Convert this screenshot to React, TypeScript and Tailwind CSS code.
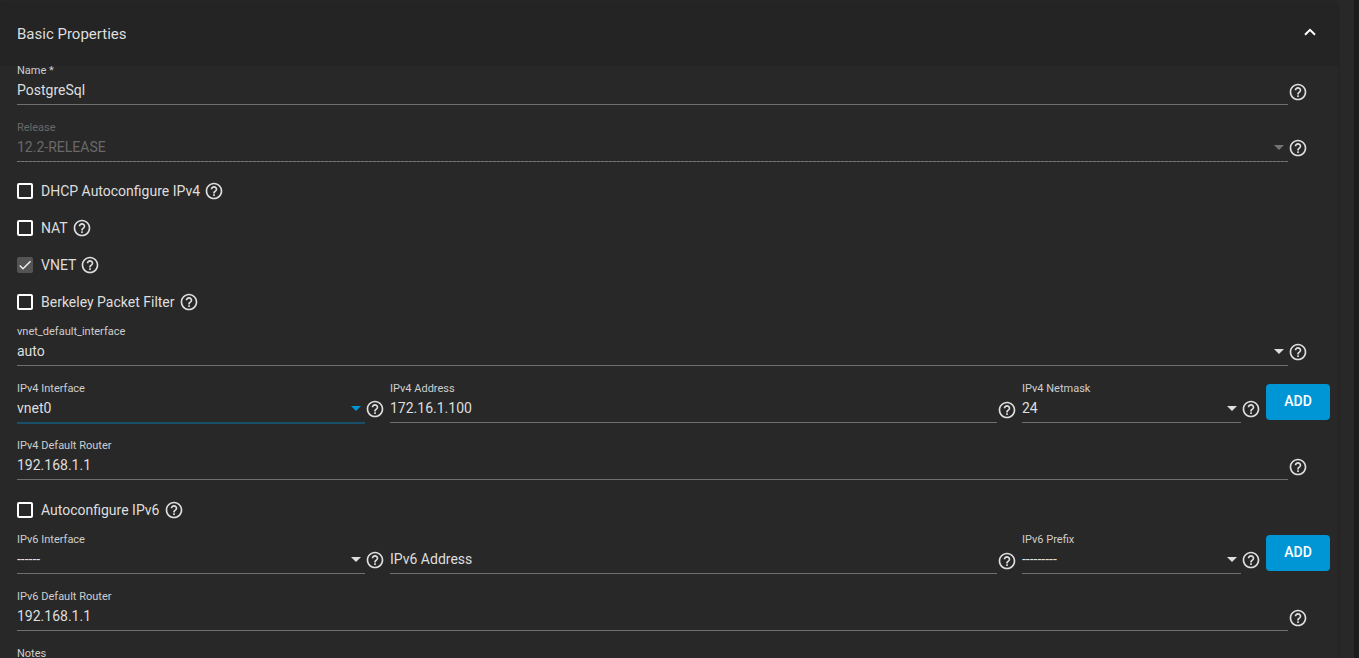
import { useId, useState } from "react";
import type { ReactNode } from "react";
import { MdHelpOutline } from "react-icons/md";

function Help({ topic }: { topic: string }) {
  return (
    <button type="button" aria-label={`Help: ${topic}`} className="block size-5 shrink-0 text-[#dedede]">
      <MdHelpOutline className="size-5" />
    </button>
  );
}

type FieldProps = {
  label: string;
  kind: "text" | "select";
  value?: string;
  disabled?: boolean;
  focused?: boolean;
  floating?: boolean;
};

function Field({ label, kind, value = "", disabled, focused, floating = true }: FieldProps) {
  const id = useId();
  const [current, setCurrent] = useState(value);
  const tone = disabled ? "text-[#686868]" : "text-[#dedede]";
  const labelTone = disabled ? "text-[#686868]" : "text-[#cecece]";
  const arrowTone = focused ? "text-[#0095d5]" : disabled ? "text-[#747474]" : "text-[#dedede]";
  return (
    <div className="flex min-w-0">
      <div className="flex h-[39px] min-w-0 flex-1 flex-col">
        <label htmlFor={id} className={`h-[10px] text-[11px] leading-[10px] ${floating ? labelTone : "invisible"}`}>
          {label}
        </label>
        <div className="mt-1 grid items-center">
          {kind === "text" ? (
            <input
              id={id}
              aria-label={label}
              placeholder={floating ? undefined : label}
              value={current}
              onChange={(e) => setCurrent(e.target.value)}
              className={`col-start-1 row-start-1 h-5 w-full min-w-0 bg-transparent text-sm outline-none placeholder:text-[#dedede] ${tone}`}
            />
          ) : (
            <>
              <select
                id={id}
                disabled={disabled}
                defaultValue={value}
                className={`col-start-1 row-start-1 h-5 w-full min-w-0 appearance-none bg-transparent text-sm opacity-100 outline-none ${tone}`}
              >
                <option value={value}>{value}</option>
              </select>
              <svg
                viewBox="0 0 10 5"
                aria-hidden="true"
                className={`pointer-events-none col-start-1 row-start-1 mr-1 h-[5px] w-[10px] justify-self-end ${arrowTone}`}
              >
                <path d="M0 0h10L5 5z" fill="currentColor" />
              </svg>
            </>
          )}
        </div>
        {disabled ? (
          <div className="mt-1 h-px shrink-0 bg-[repeating-linear-gradient(to_right,#747474_0_3px,#555555_3px_4px)]" />
        ) : focused ? (
          <div className="mt-1 h-0.5 shrink-0 bg-[#185069]" />
        ) : (
          <div className="mt-1 h-px shrink-0 bg-[#6f6f6f]" />
        )}
      </div>
      <div className={kind === "text" ? "pt-4" : "pt-[15px]"}>
        <Help topic={label} />
      </div>
    </div>
  );
}

function Check({ label, checked = false, disabled }: { label: string; checked?: boolean; disabled?: boolean }) {
  const [on, setOn] = useState(checked);
  return (
    <div className="flex h-9 items-center gap-1">
      <label className="flex items-center gap-2 text-sm text-[#dedede]">
        <span className="grid size-4">
          <input
            type="checkbox"
            checked={on}
            disabled={disabled}
            onChange={(e) => setOn(e.target.checked)}
            className="col-start-1 row-start-1 size-4 appearance-none rounded-xs border-2 border-white checked:border-[#545454] checked:bg-[#545454]"
          />
          {on && (
            <svg viewBox="0 0 24 24" aria-hidden="true" className="pointer-events-none col-start-1 row-start-1 size-4">
              <path d="M4.1 12.7 9 17.6 20.3 6.3" fill="none" stroke="#f0f0f0" strokeWidth="2.2" />
            </svg>
          )}
        </span>
        {label}
      </label>
      <Help topic={label} />
    </div>
  );
}

function AddressRow({ children }: { children: ReactNode }) {
  return (
    <div className="-mr-[22px] grid grid-cols-[373fr_632fr_244fr_64px] items-start *:pr-[5px]">
      {children}
      <button
        type="button"
        className="h-9 w-16 rounded-sm bg-[#0095d5] !px-0 pb-0.5 text-sm font-medium text-white"
      >
        ADD
      </button>
    </div>
  );
}

export default function App() {
  const [open, setOpen] = useState(true);
  return (
    <main className="h-screen overflow-hidden border-r-[5px] border-[#1c1c1c] bg-[#282828] pt-px pr-4 font-['Roboto',sans-serif]">
      <section className="min-h-full rounded-t-sm bg-[#282828] shadow-[0_1px_3px_rgba(0,0,0,0.3)]">
        <h2>
          <button
            type="button"
            aria-expanded={open}
            onClick={() => setOpen(!open)}
            className="flex h-[65px] w-full items-center justify-between rounded-t-sm bg-[#242424] pt-0.5 pr-[22px] pl-[17px] text-[15px] text-[#dedede]"
          >
            Basic Properties
            <svg viewBox="0 0 12 8" aria-hidden="true" className="mb-1.5 h-2 w-3">
              <path d="M1 6.8 6 1.8l5 5" fill="none" stroke="#fff" strokeWidth="2" />
            </svg>
          </button>
        </h2>
        {open && (
          <form className="flex flex-col pr-[30px] pl-[17px]">
            <div className="flex flex-col gap-[18px]">
              <Field label="Name *" kind="text" value="PostgreSql" />
              <Field label="Release" kind="select" value="12.2-RELEASE" disabled />
            </div>
            <div className="flex flex-col gap-px pt-[11px] pb-[7px]">
              <Check label="DHCP Autoconfigure IPv4" />
              <Check label="NAT" />
              <Check label="VNET" checked disabled />
              <Check label="Berkeley Packet Filter" />
            </div>
            <div className="flex flex-col gap-[18px]">
              <Field label="vnet_default_interface" kind="select" value="auto" />
              <AddressRow>
                <Field label="IPv4 Interface" kind="select" value="vnet0" focused />
                <Field label="IPv4 Address" kind="text" value="172.16.1.100" />
                <Field label="IPv4 Netmask" kind="select" value="24" />
              </AddressRow>
              <Field label="IPv4 Default Router" kind="text" value="192.168.1.1" />
            </div>
            <div className="flex flex-col pt-3 pb-[7px]">
              <Check label="Autoconfigure IPv6" />
            </div>
            <div className="flex flex-col gap-[18px]">
              <AddressRow>
                <Field label="IPv6 Interface" kind="select" value="------" />
                <Field label="IPv6 Address" kind="text" floating={false} />
                <Field label="IPv6 Prefix" kind="select" value="---------" />
              </AddressRow>
              <Field label="IPv6 Default Router" kind="text" value="192.168.1.1" />
              <Field label="Notes" kind="text" />
            </div>
          </form>
        )}
      </section>
    </main>
  );
}
